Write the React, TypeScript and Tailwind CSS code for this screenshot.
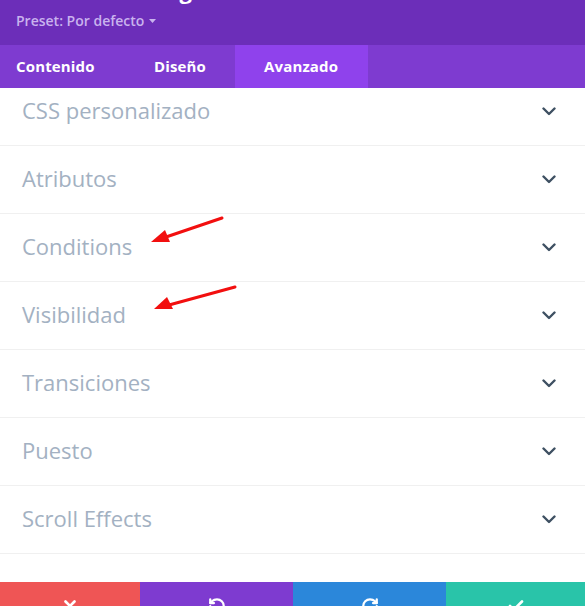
import React from 'react';
import { X, RotateCcw, RotateCw, Check } from 'lucide-react';

const rows = [
  'CSS personalizado',
  'Atributos',
  'Conditions',
  'Visibilidad',
  'Transiciones',
  'Puesto',
  'Scroll Effects',
];

const Chevron = () => (
  <svg width="14" height="9" viewBox="0 0 14 9" fill="none" className="shrink-0">
    <path d="M1.5 1.5 L7 7 L12.5 1.5" stroke="#3e5062" strokeWidth="2.4" strokeLinecap="round" strokeLinejoin="round" />
  </svg>
);

export default function App() {
  return (
    <div className="relative h-[606px] w-[585px] overflow-hidden bg-white flex flex-col font-['Open_Sans',sans-serif]">
      {/* --- Header (title scrolled mostly out of view) --- */}
      <div className="h-[45px] shrink-0 overflow-hidden bg-[#6c2eb9] px-4">
        <div className="-mt-[21.5px] h-[22px] text-[22px] leading-[22px] font-bold text-white whitespace-nowrap">Módulo de Imagen</div>
        <div className="mt-[10px] flex items-center gap-[5px] text-[14px] leading-[20px] font-semibold text-[#c9b3ee]">
          <span>Preset: Por defecto</span>
          <svg width="7" height="4" viewBox="0 0 7 4"><path d="M0 0 H7 L3.5 4 Z" fill="#c9b3ee" /></svg>
        </div>
      </div>

      {/* --- Tabs --- */}
      <div className="h-[43px] shrink-0 flex bg-[#7e3bd0] text-[15px] font-bold text-white tracking-[0.15px]">
        <div className="w-[124px] flex items-center pl-4">Contenido</div>
        <div className="w-[111px] flex items-center pl-[30px]">Diseño</div>
        <div className="w-[133px] flex items-center pl-[29px] bg-[#8f42ec]">Avanzado</div>
      </div>

      {/* --- Toggles --- */}
      <div className="h-[494px] shrink-0 overflow-hidden">
        <div className="-mt-[10px]">
          {rows.map(r => (
            <div key={r} className="h-[68px] flex items-center justify-between pl-[22px] pr-[29px] border-b border-[#f0f0f0]">
              <span className="mb-[3px] text-[22px] text-[#a3b1c2]">{r}</span>
              <Chevron />
            </div>
          ))}
        </div>
      </div>

      {/* --- Footer buttons --- */}
      <div className="h-[48px] shrink-0 flex text-white">
        <div className="w-[140px] flex items-center justify-center bg-[#ef5555]"><X size={18} strokeWidth={3.5} /></div>
        <div className="w-[153px] flex items-center justify-center bg-[#7e3bd0]"><RotateCcw size={18} strokeWidth={3} /></div>
        <div className="w-[153px] flex items-center justify-center bg-[#2b87da]"><RotateCw size={18} strokeWidth={3} /></div>
        <div className="flex-1 flex items-center justify-center bg-[#29c4a9]"><Check size={18} strokeWidth={3.5} /></div>
      </div>

      {/* --- Annotation arrows --- */}
      <svg className="absolute inset-0 pointer-events-none" width="585" height="606">
        <line x1="222" y1="218" x2="166" y2="237" stroke="#f20f0f" strokeWidth="3" strokeLinecap="round" />
        <path d="M151 242 L165 230 L170 242 Z" fill="#f20f0f" />
        <line x1="235" y1="287" x2="169" y2="305" stroke="#f20f0f" strokeWidth="3" strokeLinecap="round" />
        <path d="M154 309 L167 297 L173 309 Z" fill="#f20f0f" />
      </svg>
    </div>
  );
}
